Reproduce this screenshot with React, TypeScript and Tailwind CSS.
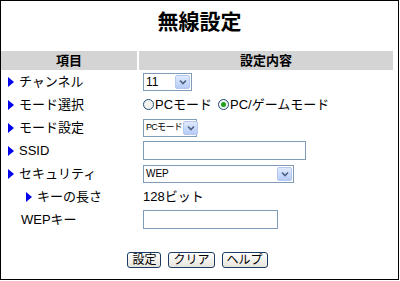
import React from 'react';

const font = "font-['Liberation_Sans','Noto_Sans_CJK_JP',sans-serif]";

function Arrow() {
  return (
    <svg width="6" height="10" viewBox="0 0 6 10" className="mr-[5px] shrink-0">
      <path d="M0 0 L6 5 L0 10 Z" fill="#0000ee" />
    </svg>
  );
}

function Select({ value, width, text = 'text-[10px]' }: { value: string; width: string; text?: string }) {
  return (
    <div className={`flex h-[18px] items-center border border-[#7f9db9] bg-white ${width}`}>
      <span className={`flex-1 whitespace-nowrap pl-[2px] leading-none text-black ${text}`}>{value}</span>
      <span className="m-[1px] flex h-[14px] w-[15px] shrink-0 items-center justify-center rounded-[2px] border border-[#b5c9f0] bg-gradient-to-b from-[#e0eafe] to-[#b6cbf5]">
        <svg width="8" height="6" viewBox="0 0 8 6">
          <path d="M1 1.5 L4 4.5 L7 1.5" stroke="#4d6185" strokeWidth="1.6" fill="none" />
        </svg>
      </span>
    </div>
  );
}

function Input({ width }: { width: string }) {
  return <div className={`h-[19px] border border-[#7f9db9] bg-white ${width}`} />;
}

function Radio({ checked, label }: { checked?: boolean; label: string }) {
  return (
    <span className="flex items-center">
      <span className="mr-[1px] flex h-[11px] w-[11px] items-center justify-center rounded-full border border-[#1c5180] bg-[#f2f2ee]">
        {checked && <span className="h-[5px] w-[5px] rounded-full bg-[#21a121]" />}
      </span>
      <span>{label}</span>
    </span>
  );
}

function Row({ label, indent, arrow = true, children }: { label: string; indent?: boolean; arrow?: boolean; children: React.ReactNode }) {
  return (
    <div className="flex h-[23px] items-center">
      <div className={`flex w-[142px] items-center ${indent ? 'pl-[25px]' : 'pl-[7px]'} ${arrow ? '' : 'pl-[20px]'}`}>
        {arrow && <Arrow />}
        <span>{label}</span>
      </div>
      <div className="flex items-center">{children}</div>
    </div>
  );
}

function Btn({ label }: { label: string }) {
  return (
    <button className="flex h-[16px] items-center rounded-[3px] border border-[#1c3c64] bg-gradient-to-b from-white to-[#e6e4dc] px-[4px] text-[12px] leading-none text-black">
      {label}
    </button>
  );
}

export default function App() {
  return (
    <div className={`h-[281px] w-[400px] overflow-hidden bg-white ${font} text-[13px] text-black`}>
      <div className="h-[280px] w-[399px] border border-black">
        <h1 className="flex h-[50px] items-center justify-center pb-[8px] text-[21px] font-bold">無線設定</h1>
        <div className="flex h-[19px] gap-[2px] pr-[5px]">
          <div className="flex w-[136px] items-center justify-center bg-[#d4d4d4] font-bold">項目</div>
          <div className="flex flex-1 items-center justify-center bg-[#d4d4d4] font-bold">設定内容</div>
        </div>
        <Row label="チャンネル">
          <Select value="11" width="w-[49px]" text="text-[12px]" />
        </Row>
        <Row label="モード選択">
          <div className="flex gap-[6px]">
            <Radio label="PCモード" />
            <Radio checked label="PC/ゲームモード" />
          </div>
        </Row>
        <Row label="モード設定">
          <Select value="PCモード" width="w-[54px]" text="text-[9px] tracking-[-0.7px]" />
        </Row>
        <Row label="SSID">
          <Input width="w-[163px]" />
        </Row>
        <Row label="セキュリティ">
          <Select value="WEP" width="w-[151px]" />
        </Row>
        <Row label="キーの長さ" indent>
          <span>128ビット</span>
        </Row>
        <Row label="WEPキー" arrow={false}>
          <Input width="w-[135px]" />
        </Row>
        <div className="mt-[21px] flex justify-center gap-[7px] pr-[4px]">
          <Btn label="設定" />
          <Btn label="クリア" />
          <Btn label="ヘルプ" />
        </div>
      </div>
    </div>
  );
}
